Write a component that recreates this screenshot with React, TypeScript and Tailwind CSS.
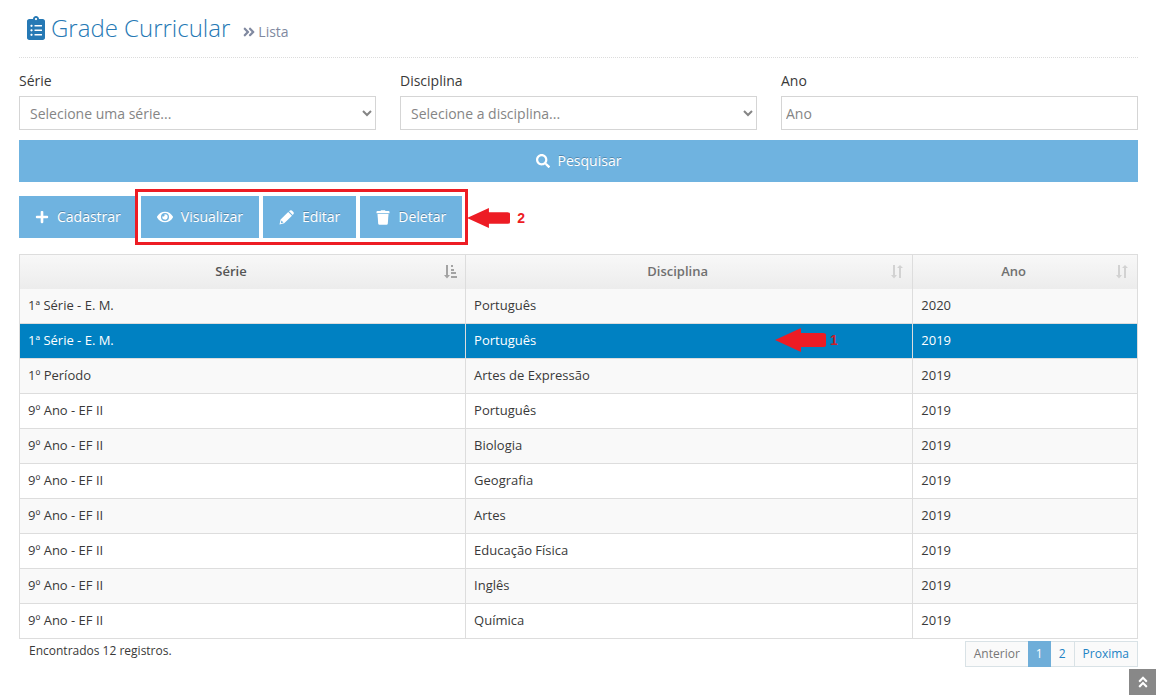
import type { ReactNode } from "react";
import {
  FaAngleDoubleRight,
  FaAngleDoubleUp,
  FaClipboardList,
  FaEye,
  FaPlus,
  FaSearch,
} from "react-icons/fa";

type Registro = { serie: string; disciplina: string; ano: number };

const registros: Registro[] = [
  { serie: "1ª Série - E. M.", disciplina: "Português", ano: 2020 },
  { serie: "1ª Série - E. M.", disciplina: "Português", ano: 2019 },
  { serie: "1º Período", disciplina: "Artes de Expressão", ano: 2019 },
  { serie: "9º Ano - EF II", disciplina: "Português", ano: 2019 },
  { serie: "9º Ano - EF II", disciplina: "Biologia", ano: 2019 },
  { serie: "9º Ano - EF II", disciplina: "Geografia", ano: 2019 },
  { serie: "9º Ano - EF II", disciplina: "Artes", ano: 2019 },
  { serie: "9º Ano - EF II", disciplina: "Educação Física", ano: 2019 },
  { serie: "9º Ano - EF II", disciplina: "Inglês", ano: 2019 },
  { serie: "9º Ano - EF II", disciplina: "Química", ano: 2019 },
];

const selecionado = 1;

function SortedIcon() {
  return (
    <svg width="13" height="14" viewBox="0 0 13 14" fill="#a3a3a3" aria-hidden="true">
      <path d="M2 0h2v10h2l-3 3.5L0 10h2z" />
      <path d="M7 0h2v2H7zM7 4h3v2H7zM7 7h5v2H7zM7 11h6v2H7z" />
    </svg>
  );
}

function UnsortedIcon() {
  return (
    <svg width="13" height="14" viewBox="0 0 13 14" fill="#d2d2d2" aria-hidden="true">
      <path d="M2 0h2v10h2l-3 3.5L0 10h2z" />
      <path d="M8 13h2V3h2L9 0 6 3h2z" />
    </svg>
  );
}

function PencilIcon() {
  return (
    <svg width="15" height="15" viewBox="0 0 15 15" fill="currentColor" aria-hidden="true">
      <path d="M10 1.2 11 .4Q12 -.2 12.9 .6L14.4 2.1Q15.2 3 14.5 4L13.7 4.9Z" />
      <path d="M9.2 2 13 5.7 5.2 13.3 .5 14.500 1.600 9.600ZM2.400 10.500 1.800 13.200 4.500 12.600Z" fillRule="evenodd" />
    </svg>
  );
}

function TrashIcon() {
  return (
    <svg width="14" height="15" viewBox="0 0 14 15" fill="currentColor" aria-hidden="true">
      <path d="M4.500 1 5 .3H9L9.500 1H12.500Q13.500 1 13.500 2V3.200H.5V2Q.5 1 1.500 1Z" />
      <path d="M1.500 4H12.500L11.800 13.500Q11.700 14.700 10.500 14.700H3.500Q2.300 14.700 2.200 13.500Z" />
    </svg>
  );
}

function Arrow({ className }: { className: string }) {
  return (
    <svg className={className} viewBox="0 0 51 24" preserveAspectRatio="none" fill="#ed1c24" aria-hidden="true">
      <path d="M0 12 26 0V5H48Q51 5 51 7V17Q51 19 48 19H26V24Z" />
    </svg>
  );
}

function ActionButton({ icon, children }: { icon: ReactNode; children: ReactNode }) {
  return (
    <button
      type="button"
      className="flex h-[42px] items-center gap-2 bg-[#6fb3e0] px-4 text-sm text-white [text-shadow:0_-1px_0_rgba(0,0,0,0.25)]"
    >
      {icon}
      {children}
    </button>
  );
}

function HeaderCell({ className, icon, children }: { className: string; icon: ReactNode; children: ReactNode }) {
  return (
    <th scope="col" className={`border-x border-[#ddd] px-2 font-semibold ${className}`}>
      <button type="button" className="flex w-full items-center">
        <span className="grow pr-[10px] text-center">{children}</span>
        {icon}
      </button>
    </th>
  );
}

export default function App() {
  const label = "block h-5 text-sm leading-5";
  const field = "mt-[5px] h-[34px] w-full border border-[#d5d5d5] bg-white text-sm text-[#858585]";
  const pageLink = "flex items-center border border-[#d9e2e6] bg-[#fafafa] px-2";

  return (
    <div className="bg-white font-['Open_Sans',sans-serif] text-[13px] text-[#393939]">
      <main className="pr-[18px] pl-[19px]">
        <header className="flex h-[58px] items-center border-b border-dotted border-[#dcdcdc] pb-[2px] pl-2 text-[#2679b5]">
          <h1 className="flex items-center gap-[6px] text-[24px] leading-8 font-light">
            <FaClipboardList className="h-6 w-[18px]" aria-hidden="true" />
            Grade Curricular
          </h1>
          <p className="mt-2 ml-3 flex items-center gap-[2px] text-sm text-[#8089a0]">
            <FaAngleDoubleRight className="size-[14px]" aria-hidden="true" />
            Lista
          </p>
        </header>

        <form>
          <div className="mt-[13px] grid grid-cols-3 gap-6">
            <div>
              <label htmlFor="serie" className={label}>Série</label>
              <select id="serie" className={`${field} pl-[6px]`}>
                <option>Selecione uma série...</option>
              </select>
            </div>
            <div>
              <label htmlFor="disciplina" className={label}>Disciplina</label>
              <select id="disciplina" className={`${field} pl-[6px]`}>
                <option>Selecione a disciplina...</option>
              </select>
            </div>
            <div>
              <label htmlFor="ano" className={label}>Ano</label>
              <input id="ano" type="text" placeholder="Ano" className={`${field} px-1 placeholder:text-[#858585]`} />
            </div>
          </div>
          <button
            type="button"
            className="mt-[10px] flex h-[42px] w-full items-center justify-center gap-2 bg-[#6fb3e0] text-sm text-white [text-shadow:0_-1px_0_rgba(0,0,0,0.25)]"
          >
            <FaSearch className="size-[14px]" aria-hidden="true" />
            Pesquisar
          </button>
        </form>

        <div className="mt-[14px] flex gap-1">
          <ActionButton icon={<FaPlus className="size-[14px]" aria-hidden="true" />}>Cadastrar</ActionButton>
          <div className="relative flex gap-1">
            <ActionButton icon={<FaEye className="size-4" aria-hidden="true" />}>Visualizar</ActionButton>
            <ActionButton icon={<PencilIcon />}>Editar</ActionButton>
            <ActionButton icon={<TrashIcon />}>Deletar</ActionButton>
            <div className="pointer-events-none absolute -inset-x-[6px] -inset-y-[7px] border-[3px] border-[#ed1c24]" />
            <div className="absolute top-0 left-full ml-[5px] flex h-11 items-center gap-[7px] font-['Liberation_Sans',sans-serif] text-sm font-bold text-[#ed1c24]">
              <Arrow className="h-5 w-[43px]" />
              2
            </div>
          </div>
        </div>

        <table className="mt-4 w-full table-fixed border-collapse border border-[#ddd]">
          <thead>
            <tr className="h-[34px] bg-linear-to-b from-[#f8f8f8] to-[#ececec] text-[#707070]">
              <HeaderCell className="w-[39.9%] text-[#555]" icon={<SortedIcon />}>Série</HeaderCell>
              <HeaderCell className="w-2/5" icon={<UnsortedIcon />}>Disciplina</HeaderCell>
              <HeaderCell className="" icon={<UnsortedIcon />}>Ano</HeaderCell>
            </tr>
          </thead>
          <tbody>
            {registros.map((r, i) => (
              <tr
                key={i}
                className={
                  i === selecionado
                    ? "h-[35px] bg-[#0081c2] font-medium text-white"
                    : "h-[35px] odd:bg-[#f9f9f9]"
                }
              >
                <td className="border-x border-b border-[#ddd] px-2">{r.serie}</td>
                <td className="relative border-x border-b border-[#ddd] px-2">
                  {r.disciplina}
                  {i === selecionado && (
                    <div className="absolute top-0 left-[309px] flex h-8 items-center gap-1 font-['Liberation_Sans',sans-serif] text-sm font-bold text-[#c8202c]">
                      <Arrow className="h-6 w-[51px]" />
                      1
                    </div>
                  )}
                </td>
                <td className="border-x border-b border-[#ddd] px-2">{r.ano}</td>
              </tr>
            ))}
          </tbody>
        </table>

        <footer className="flex items-start justify-between">
          <p className="mt-[2px] pl-[10px] text-xs leading-5">Encontrados 12 registros.</p>
          <nav aria-label="Paginação" className="mt-[2px] flex h-[26px] text-xs text-[#2283c5]">
            <span className={`${pageLink} border-r-0 text-[#777]`}>Anterior</span>
            <a href="#1" aria-current="page" className="flex items-center bg-[#6faed9] px-2 text-white">1</a>
            <a href="#2" className={`${pageLink} border-l-0`}>2</a>
            <a href="#proxima" className={`${pageLink} border-l-0`}>Proxima</a>
          </nav>
        </footer>
      </main>

      <a
        href="#topo"
        aria-label="Voltar ao topo"
        className="fixed right-0 bottom-0 flex h-[26px] w-[27px] items-center justify-center bg-[#888] text-white"
      >
        <FaAngleDoubleUp className="size-[14px]" />
      </a>
    </div>
  );
}
